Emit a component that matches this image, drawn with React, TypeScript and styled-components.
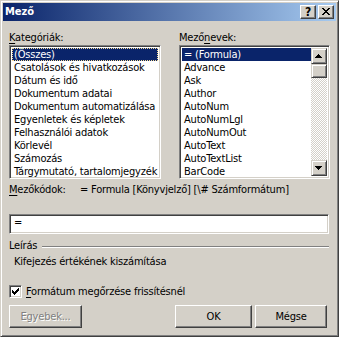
import React from "react"
import styled, { createGlobalStyle, css } from "styled-components"

const GlobalStyle = createGlobalStyle`
  html, body {
    margin: 0;
    padding: 0;
    background: #d4d0c8;
  }
  body {
    font-family: "DejaVu Sans Condensed", "DejaVu Sans", sans-serif;
    font-size: 11px;
    letter-spacing: -0.2px;
    color: #000;
  }
`

const raised = css`
  border: 1px solid;
  border-color: #fff #404040 #404040 #fff;
  box-shadow: inset -1px -1px #808080, inset 1px 1px #d4d0c8;
`

const sunken = css`
  border: 1px solid;
  border-color: #808080 #fff #fff #808080;
  box-shadow: inset 1px 1px #404040, inset -1px -1px #d4d0c8;
`

const Window = styled.div`
  box-sizing: border-box;
  width: 339px;
  height: 337px;
  background: #d4d0c8;
  border: 1px solid;
  border-color: #d4d0c8 #404040 #404040 #d4d0c8;
  box-shadow: inset 1px 1px #fff, inset -1px -1px #808080;
  padding: 2px;
  display: flex;
  flex-direction: column;
`

const TitleBar = styled.div`
  height: 18px;
  display: flex;
  align-items: center;
  padding: 0 2px 0 2px;
  background: linear-gradient(to right, #0a246a, #a6caf0);
  color: #fff;
`

const Title = styled.span`
  flex: 1;
  font-weight: bold;
  line-height: 18px;
  letter-spacing: 0;
`

const CaptionButton = styled.div`
  box-sizing: border-box;
  width: 16px;
  height: 14px;
  margin-left: 2px;
  background: #d4d0c8;
  ${raised};
  display: flex;
  align-items: center;
  justify-content: center;
  color: #000;
  font-weight: bold;
  font-size: 12px;
  line-height: 12px;
  position: relative;
  svg {
    position: absolute;
    left: -1px;
    top: -1px;
  }
`

const Body = styled.div`
  padding: 10px 6px 0 6px;
  display: flex;
  flex-direction: column;
`

const Columns = styled.div`
  display: grid;
  grid-template-columns: 152px 151px;
  column-gap: 18px;
`

const Column = styled.div`
  display: flex;
  flex-direction: column;
  gap: 1px;
`

const Label = styled.div`
  line-height: 13px;
  height: 13px;
  white-space: nowrap;
`

const Key = styled.span`
  text-decoration: underline;
  text-underline-offset: 2px;
`

const ListBox = styled.div`
  box-sizing: border-box;
  height: 134px;
  background: #fff;
  ${sunken};
  padding: 2px;
  display: flex;
  overflow: hidden;
`

const Rows = styled.div`
  flex: 1;
  min-width: 0;
`

const Row = styled.div<{ $selected?: boolean; $focused?: boolean }>`
  box-sizing: border-box;
  height: 13px;
  line-height: 13px;
  padding-left: 2px;
  white-space: nowrap;
  overflow: hidden;
  ${p =>
    p.$selected &&
    css`
      background: #0a246a;
      color: #fff;
    `}
  ${p =>
    p.$focused &&
    css`
      outline: 1px dotted #f5db95;
      outline-offset: -1px;
    `}
`

const ScrollBar = styled.div`
  width: 16px;
  display: flex;
  flex-direction: column;
  background: repeating-conic-gradient(#fff 0 25%, #d4d0c8 0 50%) 0 0 / 2px 2px;
`

const ScrollButton = styled.div<{ $height?: number }>`
  box-sizing: border-box;
  width: 16px;
  height: ${p => p.$height ?? 16}px;
  background: #d4d0c8;
  border: 1px solid;
  border-color: #d4d0c8 #404040 #404040 #d4d0c8;
  box-shadow: inset 1px 1px #fff, inset -1px -1px #808080;
  position: relative;
  svg {
    position: absolute;
    left: -1px;
    top: -1px;
  }
`

const Track = styled.div`
  flex: 1;
`

const CodeRow = styled.div`
  display: flex;
  margin-top: 4px;
  line-height: 13px;
  white-space: nowrap;
`

const CodeLabel = styled.span`
  width: 71px;
`

const TextField = styled.div`
  box-sizing: border-box;
  height: 20px;
  margin-top: 18px;
  width: 320px;
  background: #fff;
  ${sunken};
  padding: 0 4px;
  line-height: 16px;
`

const Group = styled.div`
  display: flex;
  align-items: center;
  margin-top: 5px;
  height: 13px;
  width: 320px;
  gap: 5px;
`

const Etched = styled.div`
  flex: 1;
  height: 0;
  border-top: 1px solid #808080;
  border-bottom: 1px solid #fff;
  margin-top: 2px;
`

const Description = styled.div`
  margin-top: 3px;
  padding-left: 5px;
  line-height: 13px;
`

const CheckRow = styled.div`
  display: flex;
  align-items: center;
  margin-top: 17px;
  gap: 4px;
  height: 13px;
`

const CheckBox = styled.div`
  box-sizing: border-box;
  width: 13px;
  height: 13px;
  background: #fff;
  ${sunken};
  position: relative;
  svg {
    position: absolute;
    left: -1px;
    top: -1px;
  }
`

const ButtonRow = styled.div`
  display: flex;
  gap: 3px;
  margin-top: 7px;
  width: 318px;
`

const Button = styled.div<{ $width: number; $disabled?: boolean }>`
  box-sizing: border-box;
  width: ${p => p.$width}px;
  height: 23px;
  ${raised};
  background: #d4d0c8;
  display: flex;
  align-items: center;
  justify-content: center;
  ${p =>
    p.$disabled &&
    css`
      color: #808080;
      text-shadow: 1px 1px #fff;
    `}
`

const Spacer = styled.div`
  flex: 1;
`

const categories = [
  "(Összes)",
  "Csatolások és hivatkozások",
  "Dátum és idő",
  "Dokumentum adatai",
  "Dokumentum automatizálása",
  "Egyenletek és képletek",
  "Felhasználói adatok",
  "Körlevél",
  "Számozás",
  "Tárgymutató, tartalomjegyzék",
]

const fieldNames = [
  "= (Formula)",
  "Advance",
  "Ask",
  "Author",
  "AutoNum",
  "AutoNumLgl",
  "AutoNumOut",
  "AutoText",
  "AutoTextList",
  "BarCode",
]

const UpArrow = () => (
  <svg width="16" height="16" viewBox="0 0 16 16" shapeRendering="crispEdges">
    <path d="M7 6h1v1h-1z M6 7h3v1h-3z M5 8h5v1h-5z M4 9h7v1h-7z" fill="#000" />
  </svg>
)

const DownArrow = () => (
  <svg width="16" height="16" viewBox="0 0 16 16" shapeRendering="crispEdges">
    <path d="M4 6h7v1h-7z M5 7h5v1h-5z M6 8h3v1h-3z M7 9h1v1h-1z" fill="#000" />
  </svg>
)

const CloseGlyph = () => (
  <svg width="16" height="14" viewBox="0 0 16 14" shapeRendering="crispEdges">
    <path
      d="M4 3h2v1h-2z M10 3h2v1h-2z M5 4h2v1h-2z M9 4h2v1h-2z M6 5h4v1h-4z M7 6h2v1h-2z M6 7h4v1h-4z M5 8h2v1h-2z M9 8h2v1h-2z M4 9h2v1h-2z M10 9h2v1h-2z"
      fill="#000"
    />
  </svg>
)

const CheckMark = () => (
  <svg width="13" height="13" viewBox="0 0 13 13" shapeRendering="crispEdges">
    <path
      d="M9 3h1v1h-1z M8 4h2v1h-2z M3 5h1v1h-1z M7 5h3v1h-3z M3 6h2v1h-2z M6 6h3v1h-3z M3 7h5v1h-5z M4 8h3v1h-3z M5 9h1v1h-1z"
      fill="#000"
    />
  </svg>
)

export default function App() {
  return (
    <>
      <GlobalStyle />
      <Window>
        <TitleBar>
          <Title>Mező</Title>
          <CaptionButton>?</CaptionButton>
          <CaptionButton>
            <CloseGlyph />
          </CaptionButton>
        </TitleBar>
        <Body>
          <Columns>
            <Column>
              <Label>
                <Key>K</Key>ategóriák:
              </Label>
              <ListBox>
                <Rows>
                  {categories.map((c, i) => (
                    <Row key={c} $selected={i === 0} $focused={i === 0}>
                      {c}
                    </Row>
                  ))}
                </Rows>
              </ListBox>
            </Column>
            <Column>
              <Label>
                Mező<Key>n</Key>evek:
              </Label>
              <ListBox>
                <Rows>
                  {fieldNames.map((f, i) => (
                    <Row key={f} $selected={i === 0}>
                      {f}
                    </Row>
                  ))}
                </Rows>
                <ScrollBar>
                  <ScrollButton>
                    <UpArrow />
                  </ScrollButton>
                  <ScrollButton $height={14} />
                  <Track />
                  <ScrollButton>
                    <DownArrow />
                  </ScrollButton>
                </ScrollBar>
              </ListBox>
            </Column>
          </Columns>
          <CodeRow>
            <CodeLabel>
              <Key>M</Key>ezőkódok:
            </CodeLabel>
            <span>= Formula [Könyvjelző] [\# Számformátum]</span>
          </CodeRow>
          <TextField>=</TextField>
          <Group>
            <span>Leírás</span>
            <Etched />
          </Group>
          <Description>Kifejezés értékének kiszámítása</Description>
          <CheckRow>
            <CheckBox>
              <CheckMark />
            </CheckBox>
            <span>
              <Key>F</Key>ormátum megőrzése frissítésnél
            </span>
          </CheckRow>
          <ButtonRow>
            <Button $width={73} $disabled>
              Egyebek...
            </Button>
            <Spacer />
            <Button $width={77}>OK</Button>
            <Button $width={72}>Mégse</Button>
          </ButtonRow>
        </Body>
      </Window>
    </>
  )
}
